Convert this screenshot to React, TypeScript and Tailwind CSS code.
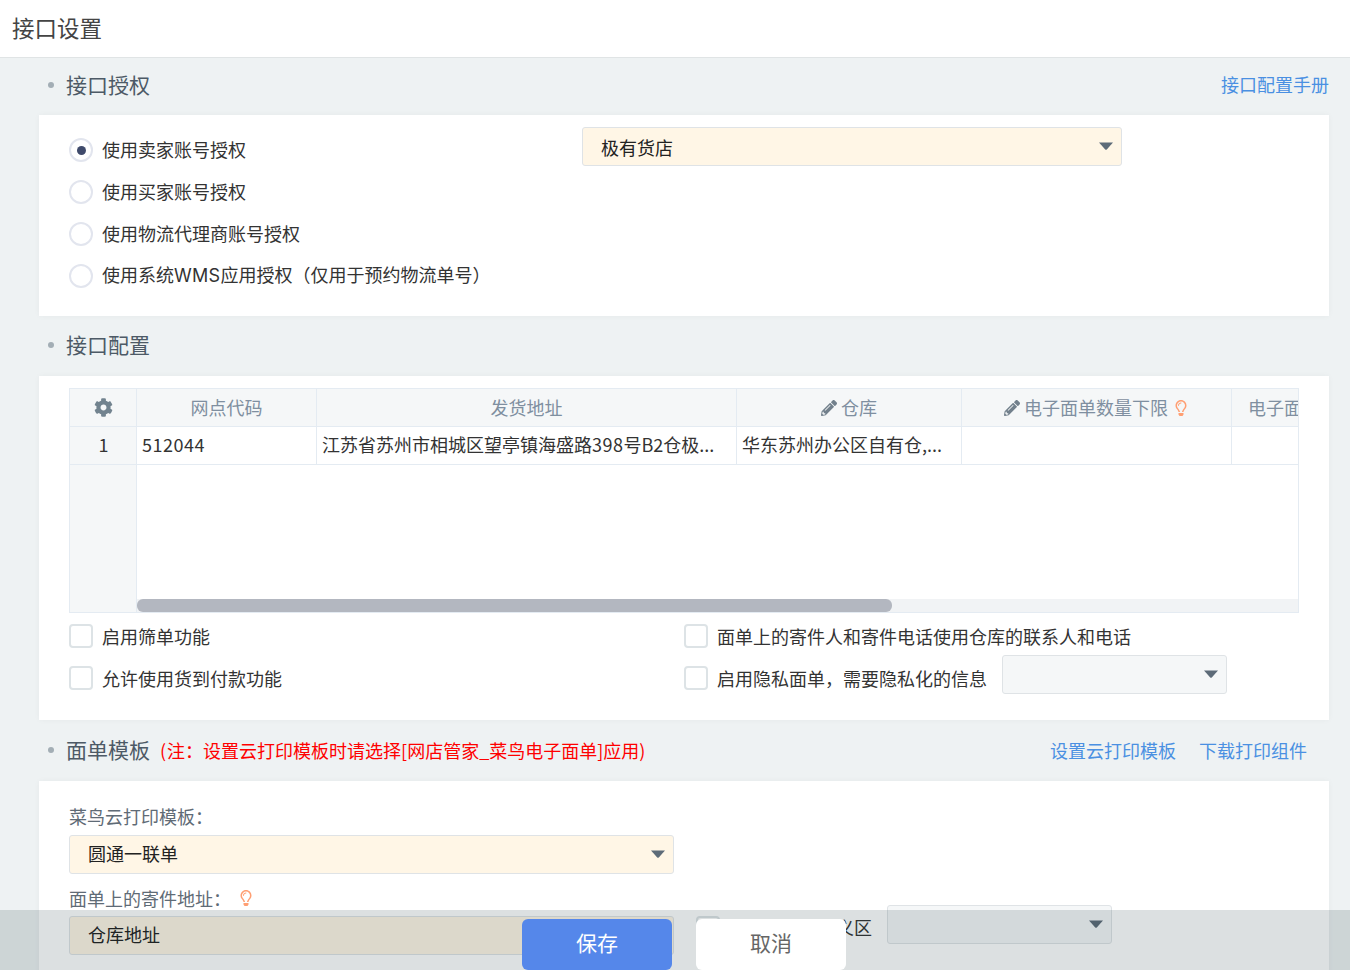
import type { ReactNode } from "react";
import { FaCog, FaPencilAlt, FaRegLightbulb } from "react-icons/fa";

const font = { fontFamily: '"Noto Sans CJK SC", sans-serif' };

const Caret = () => (
  <svg width="14" height="8" viewBox="0 0 14 8" className="absolute right-[8px] top-[14px]">
    <path d="M0 0.5h14L8 7.2a1.4 1.4 0 0 1-2 0z" fill="#5d6b78" />
  </svg>
);

// position comes from the wrapper, so the caret can sit inside a relative box
const Select = ({ value, className }: { value?: ReactNode; className: string }) => (
  <div className={`relative flex h-[39px] shrink-0 items-center rounded-[3px] border border-[#dfe3e6] pb-[2px] pl-[18px] text-[18px] text-[#222] ${className}`}>
    {value}
    <Caret />
  </div>
);

const Radio = ({ label, checked }: { label: ReactNode; checked?: boolean }) => (
  <div className="flex h-[42px] items-center gap-[9px] text-[18px] text-[#333]">
    <span className="flex h-6 w-6 items-center justify-center rounded-full border-2 border-[#e2e5ee] bg-white">
      {checked && <span className="h-[9px] w-[9px] rounded-full bg-[#3f4a6b]" />}
    </span>
    <span className="leading-6 -translate-y-[1px]">{label}</span>
  </div>
);

const Check = ({ label }: { label: string }) => (
  <div className="flex h-6 items-center gap-[9px] text-[18px] text-[#333]">
    <span className="h-6 w-6 shrink-0 rounded-[4px] border-2 border-[#dde3e6] bg-white" />
    <span className="leading-6">{label}</span>
  </div>
);

const SectionTitle = ({ title, className, children }: { title: string; className: string; children?: ReactNode }) => (
  <div className={`flex items-center pl-[48px] ${className}`}>
    <span className="mr-3 h-[6px] w-[6px] rounded-full bg-[#a3aeb5]" />
    <span className="text-[21px] text-[#4d5a66]">{title}</span>
    {children}
  </div>
);

const Th = ({ className, children }: { className: string; children: ReactNode }) => (
  <div className={`flex h-full shrink-0 items-center justify-center gap-[4px] border-r border-[#e4ebf2] text-[18px] text-[#7f8fa0] ${className}`}>
    {children}
  </div>
);

const Td = ({ className, children }: { className: string; children?: ReactNode }) => (
  <div className={`flex h-full shrink-0 items-center overflow-hidden whitespace-nowrap border-r border-[#e4ebf2] pb-[2px] pl-[5px] text-[18px] text-[#333] ${className}`}>
    {children}
  </div>
);

const App = () => {
  return (
    <div className="relative h-[970px] overflow-hidden bg-[#eef2f3]" style={font}>
      <header className="flex h-[58px] items-center border-b border-[#e0e4e5] bg-white pb-[2px] pl-3 text-[22.5px] text-[#444]">
        接口设置
      </header>

      <SectionTitle title="接口授权" className="h-[57px] pb-[4px]">
        <a className="ml-auto mr-[21px] text-[18px] text-[#4a90e2]">接口配置手册</a>
      </SectionTitle>

      <section className="relative ml-[39px] mr-[21px] h-[201px] bg-white pl-[30px] pt-[14px] shadow-[0_0_6px_rgba(0,0,0,0.04)]">
        <Radio label="使用卖家账号授权" checked />
        <Radio label="使用买家账号授权" />
        <Radio label="使用物流代理商账号授权" />
        <Radio
          label={
            <>
              使用系统<span className="font-['Inter'] tracking-[0.3px]">WMS</span>应用授权（仅用于预约物流单号）
            </>
          }
        />
        <div className="absolute left-[543px] top-[12px]">
          <Select value={<span className="translate-y-[2px]">极有货店</span>} className="w-[540px] bg-[#fff6e6]" />
        </div>
      </section>

      <SectionTitle title="接口配置" className="h-[60px] pb-[2px]" />

      <section className="ml-[39px] mr-[21px] h-[344px] bg-white px-[30px] pt-3 shadow-[0_0_6px_rgba(0,0,0,0.04)]">
        <div className="h-[225px] overflow-hidden border border-[#e4ebf2]">
          <div className="flex h-[38px] border-b border-[#e4ebf2] bg-[#f5f7f8]">
            <Th className="w-[67px]">
              <FaCog size={19} color="#72838f" />
            </Th>
            <Th className="w-[180px]">网点代码</Th>
            <Th className="w-[420px]">发货地址</Th>
            <Th className="w-[225px]">
              <FaPencilAlt size={16} color="#72808c" />
              仓库
            </Th>
            <Th className="w-[270px]">
              <FaPencilAlt size={16} color="#72808c" />
              电子面单数量下限
              <FaRegLightbulb size={16} color="#ff9f73" className="ml-[1px]" />
            </Th>
            <div className="flex h-full flex-1 items-center overflow-hidden whitespace-nowrap pl-[16px] text-[18px] text-[#7f8fa0]">
              电子面
            </div>
          </div>
          <div className="flex h-[38px] border-b border-[#e4ebf2]">
            <Td className="w-[67px] justify-center bg-[#f5f7f8] pl-0 pr-[4px]">1</Td>
            <Td className="w-[180px] tracking-[0.5px]">512044</Td>
            <Td className="w-[420px]">
              <span>
                江苏省苏州市相城区望亭镇海盛路<span className="tracking-[0.5px]">398</span>号B2仓极...
              </span>
            </Td>
            <Td className="w-[225px]">华东苏州办公区自有仓,...</Td>
            <Td className="w-[270px]" />
          </div>
          <div className="flex h-[147px]">
            <div className="w-[67px] shrink-0 border-r border-[#e4ebf2] bg-[#f5f7f8]" />
            <div className="flex flex-1 flex-col justify-end">
              <div className="h-[13px] bg-[#f1f3f5]">
                <div className="h-full w-[755px] rounded-[6px] bg-[#b3b7c0]" />
              </div>
            </div>
          </div>
        </div>

        <div className="mt-[11px] grid grid-cols-[615px_1fr] gap-y-[18px]">
          <Check label="启用筛单功能" />
          <Check label="面单上的寄件人和寄件电话使用仓库的联系人和电话" />
          <Check label="允许使用货到付款功能" />
          <div className="flex h-6 items-start gap-[15px]">
            <Check label="启用隐私面单，需要隐私化的信息" />
            <Select className="-mt-[11px] w-[225px] bg-[#f5f7f8]" />
          </div>
        </div>
      </section>

      <SectionTitle title="面单模板" className="h-[61px] pb-[2px]">
        <span className="ml-[10px] translate-y-[1px] text-[18px] text-[#ff0000]">
          <span className="mr-[1px]">(</span>注：设置云打印模板时请选择[网店管家_菜鸟电子面单]应用)
        </span>
        <a className="ml-auto translate-y-[1px] text-[18px] text-[#4a90e2]">设置云打印模板</a>
        <a className="ml-[23px] mr-[43px] translate-y-[1px] text-[18px] text-[#4a90e2]">下载打印组件</a>
      </SectionTitle>

      <section className="ml-[39px] mr-[21px] h-[260px] bg-white pl-[30px] pt-[24px] shadow-[0_0_6px_rgba(0,0,0,0.04)]">
        <div className="h-[24px] -translate-y-[1px] text-[18px] leading-[24px] text-[#5f6b76]">菜鸟云打印模板：</div>
        <Select value="圆通一联单" className="mt-[6px] w-[605px] bg-[#fff6e6]" />
        <div className="mt-[12px] flex h-[24px] items-center text-[18px] text-[#5f6b76]">
          面单上的寄件地址：
          <FaRegLightbulb size={16} color="#ff9f73" className="ml-[7px]" />
        </div>
        <div className="relative mt-[6px] flex items-start">
          <Select value="仓库地址" className="w-[605px] bg-[#fff6e6]" />
          <span className="ml-[22px] h-6 w-6 rounded-[4px] border-2 border-[#dde3e6] bg-white" />
          <span className="absolute left-[767px] top-[-2px] text-[18px] text-[#333]">义区</span>
          <div className="absolute left-[818px] top-[-11px]">
            <Select className="w-[225px] bg-[#f5f7f8]" />
          </div>
        </div>
      </section>

      <div className="absolute inset-x-0 bottom-0 h-[60px] bg-[rgba(21,48,55,0.15)]">
        <div className="absolute left-[522px] top-[9px] flex h-[51px] w-[150px] items-center justify-center rounded-[6px] bg-[#5587ea] pb-[4px] text-[21px] text-white">
          保存
        </div>
        <div className="absolute left-[696px] top-[9px] flex h-[51px] w-[150px] items-center justify-center rounded-[6px] bg-white pb-[3px] text-[21px] text-[#666]">
          取消
        </div>
      </div>
    </div>
  );
};

export default App;
